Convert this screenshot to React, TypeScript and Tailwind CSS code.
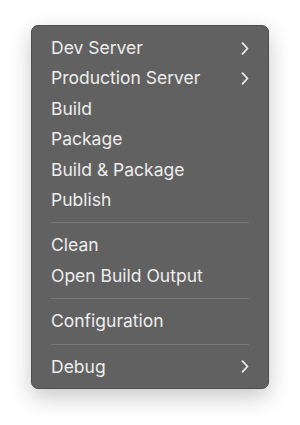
import React from 'react';

type Item = { label: string; sub?: boolean } | 'sep';

const items: Item[] = [
  { label: 'Dev Server', sub: true },
  { label: 'Production Server', sub: true },
  { label: 'Build' },
  { label: 'Package' },
  { label: 'Build & Package' },
  { label: 'Publish' },
  'sep',
  { label: 'Clean' },
  { label: 'Open Build Output' },
  'sep',
  { label: 'Configuration' },
  'sep',
  { label: 'Debug', sub: true },
];

const Chevron = () => (
  <svg width="8" height="13" viewBox="0 0 8 13" fill="none">
    <path d="M1.5 1.2 L6.5 6.5 L1.5 11.8" stroke="#ececec" strokeWidth="1.8" strokeLinecap="round" strokeLinejoin="round" />
  </svg>
);

export default function App() {
  return (
    <div className="w-[300px] h-[425px] bg-white pt-[25px] pl-[31px]">
      <div
        className="w-[238px] rounded-[7px] bg-[#616161] border border-[#4e4e4e] pt-[7px] pb-[6px] px-[19px] shadow-[0_8px_22px_rgba(0,0,0,0.22)]"
        style={{ fontFamily: 'Inter, "Noto Sans", sans-serif' }}
      >
        {items.map((it, i) =>
          it === 'sep' ? (
            <div key={i} className="h-[15px] flex items-center">
              <div className="h-px w-full bg-[#787878]" />
            </div>
          ) : (
            <div key={i} className="h-[30.4px] flex items-center justify-between text-[17.5px] text-[#ededed]">
              <span>{it.label}</span>
              {it.sub && <Chevron />}
            </div>
          )
        )}
      </div>
    </div>
  );
}
